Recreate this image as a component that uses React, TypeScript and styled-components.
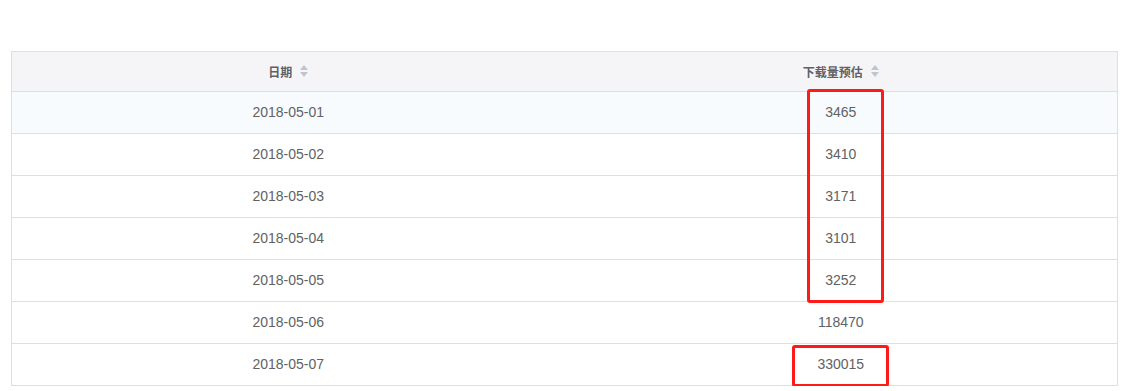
import React from 'react';
import styled, { createGlobalStyle } from 'styled-components';

const GlobalStyle = createGlobalStyle`
  body {
    margin: 0;
    background: #ffffff;
    font-family: 'Liberation Sans', 'Noto Sans CJK SC', sans-serif;
  }
`;

const Page = styled.div`
  padding: 51px 12px 0 11px;
`;

const TableWrap = styled.div`
  position: relative;
`;

const Table = styled.table`
  width: 100%;
  border-collapse: collapse;
  border: 1px solid #dcdfe6;
  table-layout: fixed;
  color: #606266;
`;

const HeadCell = styled.th`
  height: 38px;
  padding: 0 0 1px;
  background: #f5f5f7;
  border-bottom: 1px solid #dcdfe6;
  font-size: 12px;
  font-weight: bold;
  text-align: center;
  color: #5f6166;
`;

const HeadInner = styled.span`
  display: inline-flex;
  align-items: center;
  gap: 8px;
`;

const Caret = styled.span`
  display: inline-flex;
  flex-direction: column;
  gap: 2px;

  i {
    width: 0;
    height: 0;
    border-left: 4px solid transparent;
    border-right: 4px solid transparent;
  }

  i:first-child {
    border-bottom: 5px solid #c0c4cc;
  }

  i:last-child {
    border-top: 5px solid #c0c4cc;
  }
`;

const Row = styled.tr<{ $hl?: boolean }>`
  background: ${p => (p.$hl ? '#f8fbfd' : '#ffffff')};
`;

const Cell = styled.td`
  height: 40px;
  padding: 0 0 1px;
  border-bottom: 1px solid #dcdfe6;
  font-size: 14px;
  text-align: center;
`;

const Mark = styled.div<{ $l: number; $t: number; $w: number; $h: number }>`
  position: absolute;
  left: ${p => p.$l}px;
  top: ${p => p.$t}px;
  width: ${p => p.$w}px;
  height: ${p => p.$h}px;
  box-sizing: border-box;
  border: 3px solid #ff1a1a;
  border-radius: 3px;
  pointer-events: none;
`;

const rows = [
  ['2018-05-01', '3465'],
  ['2018-05-02', '3410'],
  ['2018-05-03', '3171'],
  ['2018-05-04', '3101'],
  ['2018-05-05', '3252'],
  ['2018-05-06', '118470'],
  ['2018-05-07', '330015'],
];

const SortHead = ({ label }: { label: string }) => (
  <HeadCell>
    <HeadInner>
      {label}
      <Caret>
        <i />
        <i />
      </Caret>
    </HeadInner>
  </HeadCell>
);

const App = () => (
  <Page>
    <GlobalStyle />
    <TableWrap>
      <Table>
        <thead>
          <tr>
            <SortHead label="日期" />
            <SortHead label="下载量预估" />
          </tr>
        </thead>
        <tbody>
          {rows.map(([date, count], i) => (
            <Row key={date} $hl={i === 0}>
              <Cell>{date}</Cell>
              <Cell>{count}</Cell>
            </Row>
          ))}
        </tbody>
      </Table>
      <Mark $l={796} $t={38} $w={77} $h={214} />
      <Mark $l={781} $t={294} $w={97} $h={42} />
    </TableWrap>
  </Page>
);

export default App;
